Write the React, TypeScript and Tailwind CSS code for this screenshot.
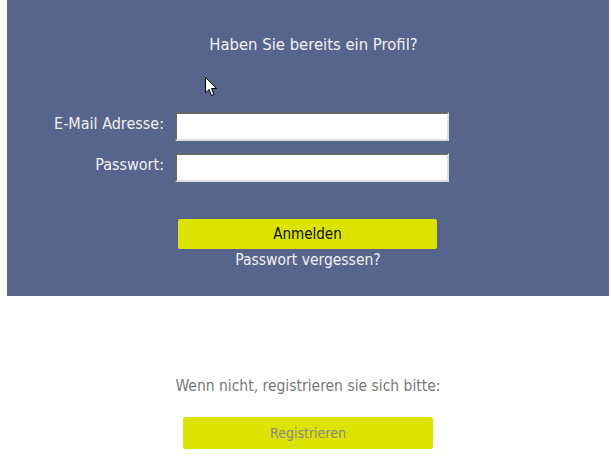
export default function App() {
  return (
    <div className="relative w-[611px] h-[456px] bg-white font-['DejaVu_Sans_Condensed','Liberation_Sans',sans-serif]">
      {/* login panel */}
      <div className="ml-[7px] w-[602px] h-[296px] bg-[#57648c] flex flex-col">
        <h2 className="pt-[35px] pl-[11px] text-center text-[16.5px] leading-[20px] text-[#f2f2f2]">
          Haben Sie bereits ein Profil?
        </h2>

        <div className="mt-[57px] flex flex-col gap-[12px]">
          <div className="flex items-start">
            <label className="w-[157px] text-right text-[16px] leading-[23px] text-[#f2f2f2]">E-Mail Adresse:</label>
            <input
              type="text"
              className="ml-[11px] w-[274px] h-[29px] bg-white border-2 border-t-[#666] border-l-[#666] border-b-[#ddd] border-r-[#ddd] outline-none"
            />
          </div>
          <div className="flex items-start">
            <label className="w-[157px] text-right text-[16px] leading-[23px] text-[#f2f2f2]">Passwort:</label>
            <input
              type="password"
              className="ml-[11px] w-[274px] h-[29px] bg-white border-2 border-t-[#666] border-l-[#666] border-b-[#ddd] border-r-[#ddd] outline-none"
            />
          </div>
        </div>

        <button className="mt-[37px] ml-[171px] w-[259px] h-[30px] rounded-[2px] bg-[#dde300] text-[15px] text-[#111]">
          Anmelden
        </button>
        <a className="mt-[1px] text-center text-[15.5px] leading-[20px] text-[#f2f2f2]">Passwort vergessen?</a>
      </div>

      {/* register */}
      <div className="pl-[5px] flex flex-col items-center">
        <p className="mt-[80px] text-[15.5px] leading-[20px] text-[#777]">
          Wenn nicht, registrieren sie sich bitte:
        </p>
        <button className="mt-[21px] w-[250px] h-[32px] rounded-[2px] bg-[#dde300] text-[14px] text-[#888]">
          Registrieren
        </button>
      </div>

      {/* mouse pointer */}
      <svg className="absolute left-[205px] top-[77px]" width="13" height="20" viewBox="0 0 13 20">
        <path d="M0.5 0.5 L0.5 16 L4 12.5 L6.5 18.5 L9 17.5 L6.5 11.5 L11.5 11.5 Z" fill="#fff" stroke="#000" strokeWidth="1" />
      </svg>
    </div>
  );
}
